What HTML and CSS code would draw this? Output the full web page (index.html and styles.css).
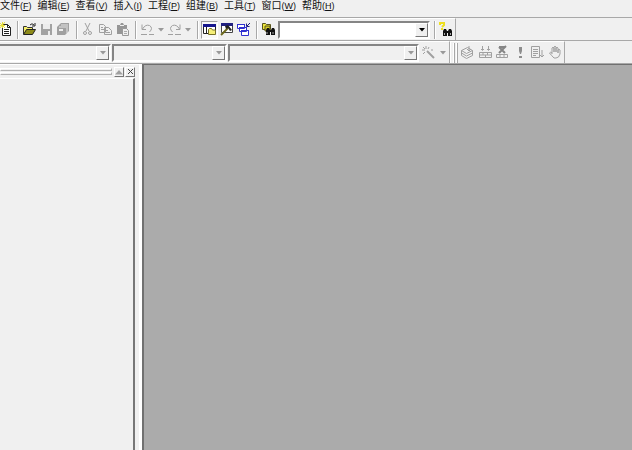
FILE: index.html
```
<!DOCTYPE html>
<html lang="zh-CN">
<head>
<meta charset="utf-8">
<title>IDE</title>
<link rel="stylesheet" href="styles.css">
</head>
<body>
<nav class="menu">
  <button>文件<span>(<u>F</u>)</span></button>
  <button>编辑<span>(<u>E</u>)</span></button>
  <button>查看<span>(<u>V</u>)</span></button>
  <button>插入<span>(<u>I</u>)</span></button>
  <button>工程<span>(<u>P</u>)</span></button>
  <button>组建<span>(<u>B</u>)</span></button>
  <button>工具<span>(<u>T</u>)</span></button>
  <button>窗口<span>(<u>W</u>)</span></button>
  <button>帮助<span>(<u>H</u>)</span></button>
</nav>

<div class="row">
  <div class="toolbar standard">
    <button class="tool edge" aria-label="新建"><svg width="13" height="15" viewBox="0 0 13 15"><path d="M2.500 2.500h5l3 3v8h-8z" fill="#fff" stroke="#222"/><path d="M7.500 2.500v3h3M4 7.500h5M4 9.500h5M4 11.500h5" fill="none" stroke="#222"/><path d="M0 1l5 5M5 0L0 6M0 3.500h5M2.500 0v6" stroke="#e8df3c"/></svg></button>
    <i class="sep"></i>
    <button class="tool" aria-label="打开"><svg width="15" height="15" viewBox="0 0 15 15"><path d="M1.500 12V4.500h3l1 1h5V8" fill="#f5ee68" stroke="#333"/><path d="M1.500 12.500L4.500 7.500h9l-3 5z" fill="#8c8a19" stroke="#222"/><path d="M8 3q2-2.500 4 0M13 1v3h-3" fill="none" stroke="#222"/></svg></button>
    <button class="tool" aria-label="保存" disabled><svg width="15" height="15" viewBox="0 0 15 15"><path d="M2 2h11v11H2z" fill="#a2a2a2"/><path d="M4 2h7v5H4zM9 9h2v4H9z" fill="#ececec"/></svg></button>
    <button class="tool" aria-label="全部保存" disabled><svg width="15" height="15" viewBox="0 0 15 15"><path d="M5 1h8v8l-4 4H1V5z" fill="#a0a0a0"/><path d="M5 3h7M3 5h7M11 4v7" fill="none" stroke="#e4e4e4"/><path d="M3 7h4v2H3z" fill="#eee"/></svg></button>
    <i class="sep"></i>
    <button class="tool" aria-label="剪切" disabled><svg class="line" width="15" height="15" viewBox="0 0 15 15"><path d="M4 1l4 8M9 1L5 9"/><circle cx="4" cy="11" r="1.500"/><circle cx="9" cy="11" r="1.500"/></svg></button>
    <button class="tool" aria-label="复制" disabled><svg class="line" width="15" height="15" viewBox="0 0 15 15"><path d="M1.500 2.500h4l2 2v6h-6zM6.500 5.500h4l3 3v4h-7zM3 5.500h2M3 7.500h3M8 8.500h2M8 10.500h4"/></svg></button>
    <button class="tool" aria-label="粘贴" disabled><svg width="15" height="15" viewBox="0 0 15 15"><path d="M2 3h3l1-2h2l1 2h3v9H2z" fill="#969696"/><path d="M5 3.500h4" stroke="#eee"/><path d="M7.500 6.500h4l2 2v5h-6z" fill="#eee" stroke="#999"/><path d="M9 9.500h3M9 11.500h3" stroke="#aaa"/></svg></button>
    <i class="sep"></i>
    <button class="tool" aria-label="撤消" disabled><svg class="line" width="15" height="15" viewBox="0 0 15 15"><path d="M2 2.500v5h4M2.500 7q3-5 7-3.500q4 2.500 0 6.500M1 12.500h6M9 12.500h5"/></svg></button>
    <button class="drop" aria-label="撤消列表" disabled><svg width="6" height="4" viewBox="0 0 6 4"><path d="M0 0h6L3 3.500z"/></svg></button>
    <button class="tool" aria-label="重做" disabled><svg class="line" width="15" height="15" viewBox="0 0 15 15"><path d="M13 2.500v5H9M12.500 7q-3-5-7-3.500q-4 2.500 0 6.500M1 12.500h5M8 12.500h6"/></svg></button>
    <button class="drop" aria-label="重做列表" disabled><svg width="6" height="4" viewBox="0 0 6 4"><path d="M0 0h6L3 3.500z"/></svg></button>
    <i class="sep"></i>
    <button class="tool pressed" aria-label="工作空间" aria-pressed="true"><svg width="15" height="15" viewBox="0 0 15 15"><path d="M1.500 2.500h12v9h-12z" fill="#fff" stroke="#222"/><path d="M1 2h13v3H1z" fill="#17178e"/><path d="M4.500 5v6" stroke="#222"/><path d="M6.500 12.500v-5l1-1h2l1 1.500h3v4.500z" fill="#f5ef78" stroke="#77712a"/></svg></button>
    <button class="tool" aria-label="输出"><svg width="15" height="15" viewBox="0 0 15 15"><path d="M2.500 2.500h11v8h-11z" fill="#fff" stroke="#444"/><path d="M2 1h12v3H2z" fill="#202080"/><path d="M2 13l7-7" stroke="#6c681c" stroke-width="2"/><path d="M6 4l3-1 4 5-2 1-2-3-2 1z" fill="#222"/></svg></button>
    <button class="tool" aria-label="窗口列表"><svg width="15" height="15" viewBox="0 0 15 15" fill="#fff" stroke="#3030d0"><path d="M1.500 2.500h7v4h-7zM3.500 5.500h7v4h-7zM5.500 8.500h7v5h-7z"/><path d="M1 2.500h8M3 5.500h8M5 8.500h8"/><path d="M14 1l-3 3M10.500 1.500v3h3" fill="none" stroke="#202080"/></svg></button>
    <i class="sep"></i>
    <button class="tool" aria-label="在文件中查找"><svg width="15" height="15" viewBox="0 0 15 15"><path d="M1.500 7.500v-6h3l1 1h4v5z" fill="#eee73c" stroke="#57531c"/><path d="M4 9V4h5v5z" fill="#d8d028" stroke="#57531c"/><path d="M5 8l1-2h2l1 2h1l1-2h2l1 2v5h-4v-3H9v3H5z" fill="#111"/><path d="M6 10v2M12 10v2" stroke="#aaa"/></svg></button>
    <div class="combo find"><select aria-label="查找"><option></option></select><span class="arrow"><svg width="6" height="4" viewBox="0 0 6 4"><path d="M0 0h6L3 3.500z"/></svg></span></div>
    <i class="sep"></i>
    <button class="tool" aria-label="搜索"><svg width="15" height="15" viewBox="0 0 15 15"><path d="M1 3V1h4v2L3 5M3 6v2" fill="none" stroke="#eee01f" stroke-width="2"/><path d="M4 9l1-2h2l1 2h1l1-2h2l1 2v5h-4v-3H8v3H4z" fill="#111"/><path d="M5.500 11v2M11.500 11v2" stroke="#aaa"/></svg></button>
  </div>
</div>

<div class="row">
  <div class="toolbar wizard">
    <div class="combo off cls"><select aria-label="类" disabled><option></option></select><span class="arrow"><svg width="6" height="4" viewBox="0 0 6 4"><path d="M0 0h6L3 3.500z"/></svg></span></div>
    <div class="combo off filter"><select aria-label="筛选" disabled><option></option></select><span class="arrow"><svg width="6" height="4" viewBox="0 0 6 4"><path d="M0 0h6L3 3.500z"/></svg></span></div>
    <div class="combo off member"><select aria-label="成员" disabled><option></option></select><span class="arrow"><svg width="6" height="4" viewBox="0 0 6 4"><path d="M0 0h6L3 3.500z"/></svg></span></div>
    <button class="tool" aria-label="向导" disabled><svg class="line" width="15" height="15" viewBox="0 0 15 15"><path d="M6 6l7 7" stroke-width="2"/><path d="M5 1v3M1 5h3M2 2l2 2M8 2L7 4M2 9l2-2M10 5h2"/></svg></button>
    <button class="drop" aria-label="向导操作" disabled><svg width="6" height="4" viewBox="0 0 6 4"><path d="M0 0h6L3 3.500z"/></svg></button>
  </div>
  <div class="toolbar build">
    <i class="grip"></i><i class="grip"></i>
    <div class="tools">
      <button class="tool" aria-label="编译" disabled><svg class="line" width="15" height="15" viewBox="0 0 15 15"><path d="M1.500 5.500l6-3 5 3-6 3zM1.500 8l5 3 6-3M1.500 10.500l5 3 6-3M12.500 5.500v5M1.500 5.500v5M9 1v4M7 4l2 2 2-2"/></svg></button>
      <button class="tool" aria-label="组建" disabled><svg class="line" width="15" height="15" viewBox="0 0 15 15"><path d="M1.500 7.500h12v5h-12zM1.500 10h12M5 7.500V10M9.500 7.500V10M7.500 10v3M4.500 1v4M3 4l1.500 1.500L6 4M10.500 1v4M9 4l1.500 1.500L12 4"/></svg></button>
      <button class="tool" aria-label="停止组建" disabled><svg class="line" width="15" height="15" viewBox="0 0 15 15"><path d="M1.500 9.500h11v3h-11zM5 9v4M9 9v4"/><path d="M4 2l6 6M11 1L4 8M4 2h6" stroke="#858585" stroke-width="2"/></svg></button>
      <button class="tool" aria-label="执行" disabled><svg width="15" height="15" viewBox="0 0 15 15" fill="#8d8d8d"><path d="M6 2h3v4L8 9H7L6 6zM6 11h3v2H6z"/></svg></button>
      <button class="tool" aria-label="调试" disabled><svg class="line" width="15" height="15" viewBox="0 0 15 15"><path d="M1.500 1.500h8v11h-8zM3 4.500h5M3 6.500h5M3 8.500h5M3 10.500h3M12 5v7M10 10l2 2 2-2"/></svg></button>
      <button class="tool" aria-label="断点" disabled><svg class="line" width="15" height="15" viewBox="0 0 15 15"><path d="M4 9V3q1-1.500 2 0V7 2q1-1.500 2 0V7 3q1-1.500 2 0V8 5q1-1.500 2 0v4q-1 4-4 4H6Q4 11 1.500 8q1-1.500 2.500 0"/></svg></button>
    </div>
  </div>
</div>

<main class="work">
  <aside class="panel">
    <header class="caption">
      <div class="bars"><i></i><i></i></div>
      <button class="cap" aria-label="展开"><svg width="8" height="6" viewBox="0 0 8 6"><path d="M0 5.500L4 1l4 4.500z" fill="#a0a0a0"/></svg></button>
      <button class="cap" aria-label="关闭"><svg width="7" height="7" viewBox="0 0 7 7"><path d="M1 1l5 5M6 1L1 6" stroke="#444" fill="none"/></svg></button>
    </header>
    <div class="view"></div>
  </aside>
  <section class="mdi"></section>
</main>
</body>
</html>
```
FILE: styles.css
```
* {
  box-sizing: border-box;
}

body {
  margin: 0;
  height: 100vh;
  display: flex;
  flex-direction: column;
  overflow: hidden;
  background: #f0f0f0;
  color: #111;
  font: 10px/12px "Liberation Sans", "Noto Sans CJK SC", sans-serif;
}

button {
  flex: none;
  margin: 0;
  padding: 0;
  border: 0;
  background: none;
  color: inherit;
  font: inherit;
}

svg {
  display: block;
}

.line {
  fill: none;
  stroke: #a0a0a0;
}

/* Menu bar */
.menu {
  display: flex;
  gap: 6px;
  height: 17px;
  padding-bottom: 5px;
}

.menu button {
  display: flex;
  white-space: nowrap;
}

.menu span {
  font-size: 9px;
}

.menu u {
  text-underline-offset: 1px;
}

/* Toolbars */
.row {
  display: flex;
  height: 23px;
  border-top: 1px solid #a8a8a8;
}

.toolbar {
  display: flex;
  align-items: center;
  border-top: 1px solid #fff;
  border-right: 1px solid #a8a8a8;
}

.wizard {
  gap: 1px;
  padding-right: 1px;
}

.tool {
  display: flex;
  align-items: center;
  justify-content: center;
  width: 17px;
  height: 18px;
}

.edge {
  width: 13px;
  justify-content: flex-start;
}

.pressed {
  border: 1px solid;
  border-color: #a0a0a0 #fff #fff #a0a0a0;
  background: #f8f8f8;
}

.drop {
  display: flex;
  justify-content: center;
  width: 10px;
}

.drop svg,
.off svg {
  fill: #999;
}

.sep {
  width: 8px;
  height: 18px;
  border-left: 4px solid transparent;
  background: linear-gradient(90deg, #a8a8a8 1px, #fff 1px, #fff 2px, transparent 2px) content-box;
}

.combo {
  position: relative;
  height: 18px;
  border: 2px solid;
  border-color: #858585 #fff #fff #858585;
  background: #fff;
}

.combo select {
  appearance: none;
  display: block;
  width: 100%;
  height: 100%;
  border: 0;
  background: none;
}

.arrow {
  position: absolute;
  inset: 0 0 0 auto;
  display: flex;
  align-items: center;
  justify-content: center;
  width: 13px;
  border: 1px solid;
  border-color: #fff #777 #777 #fff;
  background: #f0f0f0;
  pointer-events: none;
}

.off {
  background: #f0f0f0;
}

.find {
  width: 152px;
  margin-left: 1px;
}

.cls {
  width: 111px;
  border-left: 0;
}

.filter {
  width: 115px;
}

.member {
  width: 191px;
}

.build {
  gap: 1px;
  padding-left: 2px;
  border-left: 1px solid #fff;
}

.grip {
  width: 2px;
  height: 20px;
  border-left: 1px solid #fff;
  border-right: 1px solid #a8a8a8;
}

.tools {
  display: flex;
  justify-content: space-between;
  width: 105px;
}

/* Work area */
.work {
  flex: 1;
  display: flex;
  min-height: 0;
  border-top: 1px solid #a8a8a8;
}

.panel {
  display: flex;
  flex-direction: column;
  width: 142px;
  padding-right: 4px;
  border-top: 1px solid #fff;
  border-right: 3px solid #fff;
}

.caption {
  display: flex;
  align-items: center;
  gap: 1px;
  height: 13px;
}

.bars {
  flex: 1;
  display: grid;
  gap: 1px;
  margin-right: 1px;
}

.bars i {
  height: 3px;
  border: 1px solid;
  border-color: #fff #b0b0b0 #b0b0b0 #fff;
}

.cap {
  display: flex;
  align-items: center;
  justify-content: center;
  width: 10px;
  height: 10px;
  border: 1px solid;
  border-color: #fff #777 #777 #fff;
}

.view {
  flex: 1;
  border-top: 1px solid #fff;
  border-right: 2px solid #777;
}

.mdi {
  flex: 1;
  border: solid #707070;
  border-width: 1px 0 0 2px;
  background: #ababab;
}
```
